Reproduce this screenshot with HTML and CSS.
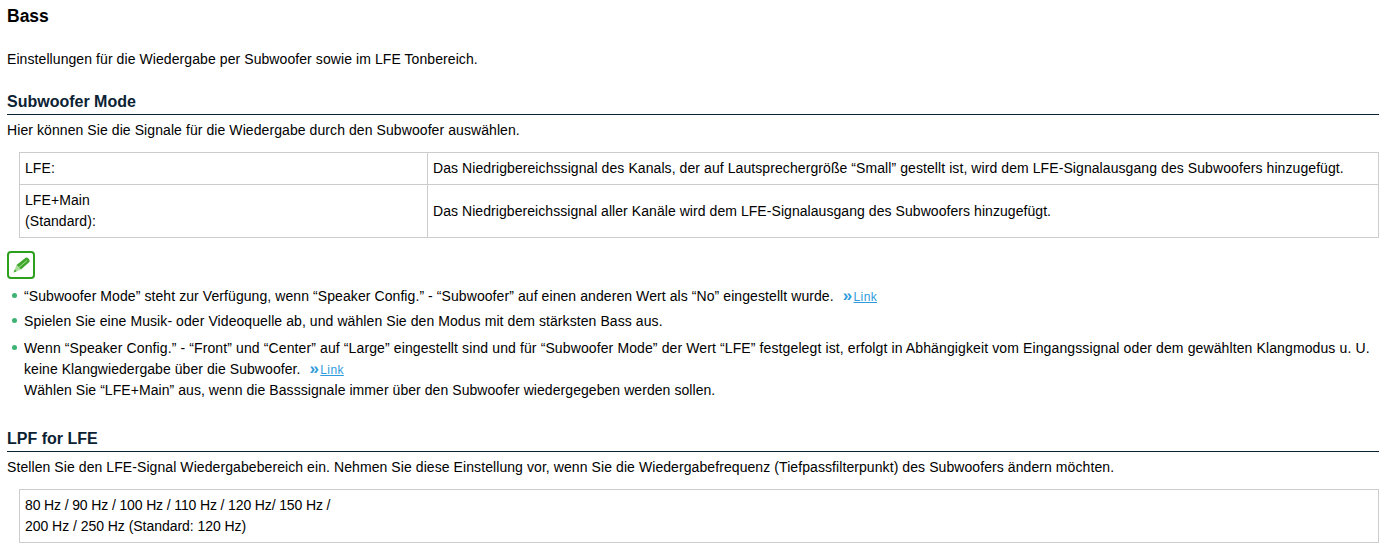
FILE: index.html
```html
<!DOCTYPE html>
<html lang="de">
<head>
<meta charset="utf-8">
<title>Bass</title>
<link rel="stylesheet" href="styles.css">
</head>
<body>
<h1 class="title">Bass</h1>
<p class="intro">Einstellungen für die Wiedergabe per Subwoofer sowie im LFE Tonbereich.</p>

<h2 class="section">Subwoofer Mode</h2>
<p class="lead">Hier können Sie die Signale für die Wiedergabe durch den Subwoofer auswählen.</p>
<table class="opts">
<tr><td class="key">LFE:</td><td>Das Niedrigbereichssignal des Kanals, der auf Lautsprechergröße “Small” gestellt ist, wird dem LFE-Signalausgang des Subwoofers hinzugefügt.</td></tr>
<tr><td class="key">LFE+Main<br>(Standard):</td><td class="tight">Das Niedrigbereichssignal aller Kanäle wird dem LFE-Signalausgang des Subwoofers hinzugefügt.</td></tr>
</table>

<div class="note-icon">
<svg width="20" height="20" viewBox="0 0 20 20"><path class="pencil" d="M5.5 10L14 3.2c1.1-.9 2.4-.8 3.2.1l1 1.3c.8 1 .6 2.2-.4 3L10 14.5z"/><path class="pencil-cut" d="M8 12.2l8.2-6.8"/><path class="pencil-tip" d="M5.5 10l4.5 4.5-7.5 3z"/><path class="pencil" d="M3.8 14.6l1.9 1.7-3.2 1.2z"/></svg>
</div>
<ul class="notes">
<li>“Subwoofer Mode” steht zur Verfügung, wenn “Speaker Config.” - “Subwoofer” auf einen anderen Wert als “No” eingestellt wurde. <a class="link" href="#"><span class="arrows">»</span><span class="link-text">Link</span></a></li>
<li>Spielen Sie eine Musik- oder Videoquelle ab, und wählen Sie den Modus mit dem stärksten Bass aus.</li>
<li><span class="line wide">Wenn “Speaker Config.” - “Front” und “Center” auf “Large” eingestellt sind und für “Subwoofer Mode” der Wert “LFE” festgelegt ist, erfolgt in Abhängigkeit vom Eingangssignal oder dem gewählten Klangmodus u. U.</span><span class="line tight">keine Klangwiedergabe über die Subwoofer. <a class="link" href="#"><span class="arrows">»</span><span class="link-text">Link</span></a></span><span class="line tight">Wählen Sie “LFE+Main” aus, wenn die Basssignale immer über den Subwoofer wiedergegeben werden sollen.</span></li>
</ul>

<h2 class="section section-lpf">LPF for LFE</h2>
<p class="lead">Stellen Sie den LFE-Signal Wiedergabebereich ein. Nehmen Sie diese Einstellung vor, wenn Sie die Wiedergabefrequenz (Tiefpassfilterpunkt) des Subwoofers ändern möchten.</p>
<div class="box"><span class="line digits">80 Hz / 90 Hz / 100 Hz / 110 Hz / 120 Hz/ 150 Hz /</span><span class="line mixed">200 Hz / 250 Hz (Standard: 120 Hz)</span></div>
</body>
</html>
```
FILE: styles.css
```css
html, body { margin: 0; padding: 0; background: #fff; }
body {
  padding: 0 11px 0 7px;
  font: 14px/21px "Liberation Sans", Arial, sans-serif;
  letter-spacing: 0.08px;
  color: #000;
}
.title { margin: 0; padding-top: 6px; font-size: 17.5px; line-height: 21px; font-weight: bold; letter-spacing: 0; }
.intro { margin: 22px 0 0; }
.section {
  margin: 21px 0 0;
  padding-bottom: 2px;
  font-size: 16px;
  line-height: 21px;
  font-weight: bold;
  letter-spacing: 0;
  color: #0b2233;
  border-bottom: 1px solid #0b2233;
}
.section-lpf { margin-top: 27px; }
.lead { margin: 5px 0 0; }
.opts {
  width: calc(100% - 12px);
  margin: 11px 0 0 12px;
  border-collapse: collapse;
}
.opts td { border: 1px solid #ccc; padding: 5px 5px; vertical-align: middle; }
.opts .key { width: 397px; }
.line { display: block; }
.wide { letter-spacing: 0.115px; }
.tight { letter-spacing: 0.06px; }
.digits { letter-spacing: -0.13px; }
.mixed { letter-spacing: -0.04px; }
.note-icon {
  width: 28px;
  height: 28px;
  box-sizing: border-box;
  margin-top: 13px;
  border: 2px solid #2ca01c;
  border-radius: 4px;
  display: flex;
  align-items: center;
  justify-content: center;
}
.pencil { fill: #3fa82a; }
.pencil-cut { stroke: #a5dc92; stroke-width: 1; fill: none; }
.pencil-tip { fill: #a8dc98; }
.notes { list-style: none; margin: 7px 0 0; padding: 0 0 0 17px; }
.notes li { position: relative; margin-bottom: 6px; }
.notes li:first-child { margin-bottom: 4px; }
.notes li::before {
  content: "";
  position: absolute;
  left: -12px;
  top: 7px;
  width: 5px;
  height: 5px;
  border-radius: 50%;
  background: #3cb371;
}
.link { color: #2f9bdc; margin-left: 5px; font-size: 12px; line-height: 1; text-decoration: none; letter-spacing: 0.4px; }
.arrows { font-size: 17px; line-height: 1; font-weight: bold; margin-right: 1px; }
.link-text { text-decoration: underline; }
.box {
  margin: 11px 0 0 12px;
  padding: 5px;
  border: 1px solid #ccc;
}
```
